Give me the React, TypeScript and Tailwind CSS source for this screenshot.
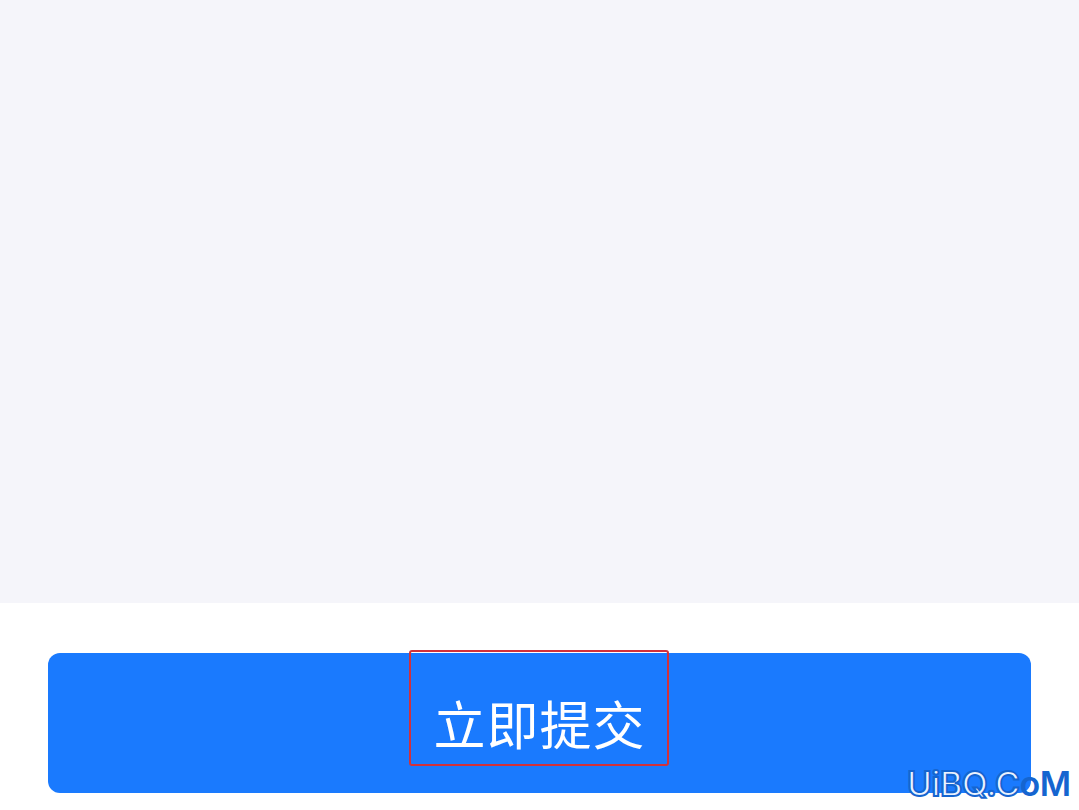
export default function App() {
  return (
    <div className="relative w-[1079px] h-[810px] overflow-hidden bg-white font-['Noto_Sans_CJK_SC','Noto_Sans',sans-serif]">
      {/* empty content area */}
      <div className="h-[603px] bg-[#f5f5fa]" />

      {/* submit bar */}
      <div className="pt-[50px] px-[48px]">
        <button className="w-full h-[140px] rounded-[12px] bg-[#1a7afe] flex items-center justify-center pt-[0px]">
          <span className="text-white text-[52px] leading-none tracking-[1px]">立即提交</span>
        </button>
      </div>

      {/* annotation box */}
      <div className="absolute left-[409px] top-[650px] w-[260px] h-[116px] border-2 border-[#d2313a] rounded-[3px]" />

      {/* watermark */}
      <div className="absolute left-[907px] top-[767px] text-[34px] leading-none font-semibold font-['Inter','Noto_Sans',sans-serif] tracking-[-0.5px]">
        <span className="text-[#eaf3ff] [-webkit-text-stroke:2px_#1565d0]">UiBQ.C</span>
        <span className="text-[#1565d0]">oM</span>
      </div>
    </div>
  );
}
